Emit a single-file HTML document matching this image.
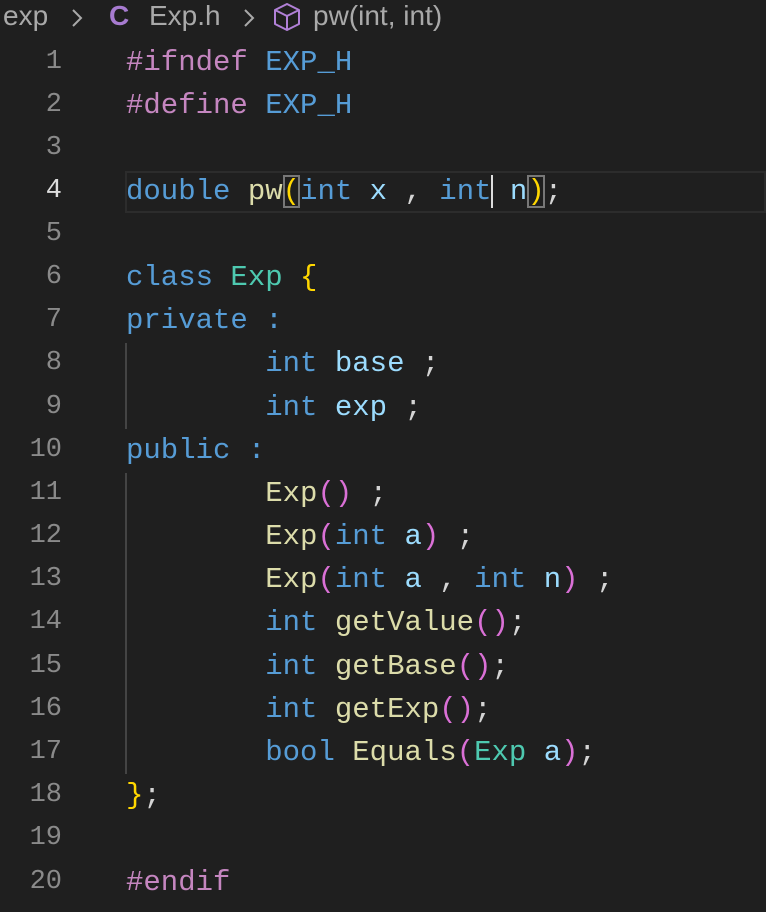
<!DOCTYPE html><html><head><style>
body{margin:0;width:766px;height:912px;background:#1f1f1f;overflow:hidden;position:relative;font-family:"Liberation Mono",monospace}
.bc{position:absolute;top:0;left:0;width:766px;height:34px;font:28px "Liberation Sans",sans-serif;color:#a9a9a9;white-space:nowrap;line-height:32px}
.bc span{position:absolute}
.l{position:absolute;left:0;width:766px;height:43px;line-height:43px;font-size:29px;white-space:pre;color:#d4d4d4}
.n{position:absolute;right:704px;color:#8a8a8a;font-size:27px}
.c{position:absolute;left:126px}
.k{color:#569cd6}.p{color:#c586c0}.f{color:#dcdcaa}.v{color:#9cdcfe}.t{color:#4ec9b0}.y{color:#ffd700}.m{color:#da70d6}
.g{position:absolute;left:125px;width:2px;background:#444}
.bx{outline:2px solid #777;outline-offset:-2px}
</style></head><body>
<div class="bc"><span style="left:3px">exp</span>
<svg style="position:absolute;left:70px;top:8px" width="14" height="20" viewBox="0 0 14 20"><path d="M3 2 L11 10 L3 18" fill="none" stroke="#a9a9a9" stroke-width="2"/></svg>
<span style="left:109px;color:#a77bd0;font-weight:bold">C</span><span style="left:149px">Exp.h</span>
<svg style="position:absolute;left:242px;top:8px" width="14" height="20" viewBox="0 0 14 20"><path d="M3 2 L11 10 L3 18" fill="none" stroke="#a9a9a9" stroke-width="2"/></svg>
<svg style="position:absolute;left:272px;top:2px" width="30" height="30" viewBox="0 0 30 30"><path d="M15 2 L27 8 L27 22 L15 28 L3 22 L3 8 Z M3 8 L15 14 L27 8 M15 14 L15 28" fill="none" stroke="#b180d7" stroke-width="2" stroke-linejoin="round"/></svg>
<span style="left:313px">pw(int, int)</span></div>
<div style="position:absolute;left:125px;top:171px;width:641px;height:42px;border:2px solid #2c2c2c;box-sizing:border-box"></div>
<div class="g" style="top:343px;height:86px"></div>
<div class="g" style="top:473px;height:301px"></div>
<div class="l" style="top:41px"><span class="n">1</span><span class="c"><span class="p">#ifndef</span> <span class="k">EXP_H</span></span></div>
<div class="l" style="top:84px"><span class="n">2</span><span class="c"><span class="p">#define</span> <span class="k">EXP_H</span></span></div>
<div class="l" style="top:127px"><span class="n">3</span></div>
<div class="l" style="top:170px"><span class="n" style="color:#ddd">4</span><span class="c"><span class="k">double</span> <span class="f">pw</span><span class="y bx">(</span><span class="k">int</span> <span class="v">x</span> , <span class="k">int</span><span style="border-left:2px solid #ddd;margin-left:-1px"></span> <span class="v">n</span><span class="y bx">)</span>;</span></div>
<div class="l" style="top:213px"><span class="n">5</span></div>
<div class="l" style="top:256px"><span class="n">6</span><span class="c"><span class="k">class</span> <span class="t">Exp</span> <span class="y">{</span></span></div>
<div class="l" style="top:299px"><span class="n">7</span><span class="c"><span class="k">private</span> <span class="k">:</span></span></div>
<div class="l" style="top:342px"><span class="n">8</span><span class="c">        <span class="k">int</span> <span class="v">base</span> ;</span></div>
<div class="l" style="top:386px"><span class="n">9</span><span class="c">        <span class="k">int</span> <span class="v">exp</span> ;</span></div>
<div class="l" style="top:429px"><span class="n">10</span><span class="c"><span class="k">public</span> <span class="k">:</span></span></div>
<div class="l" style="top:472px"><span class="n">11</span><span class="c">        <span class="f">Exp</span><span class="m">()</span> ;</span></div>
<div class="l" style="top:515px"><span class="n">12</span><span class="c">        <span class="f">Exp</span><span class="m">(</span><span class="k">int</span> <span class="v">a</span><span class="m">)</span> ;</span></div>
<div class="l" style="top:558px"><span class="n">13</span><span class="c">        <span class="f">Exp</span><span class="m">(</span><span class="k">int</span> <span class="v">a</span> , <span class="k">int</span> <span class="v">n</span><span class="m">)</span> ;</span></div>
<div class="l" style="top:601px"><span class="n">14</span><span class="c">        <span class="k">int</span> <span class="f">getValue</span><span class="m">()</span>;</span></div>
<div class="l" style="top:645px"><span class="n">15</span><span class="c">        <span class="k">int</span> <span class="f">getBase</span><span class="m">()</span>;</span></div>
<div class="l" style="top:688px"><span class="n">16</span><span class="c">        <span class="k">int</span> <span class="f">getExp</span><span class="m">()</span>;</span></div>
<div class="l" style="top:731px"><span class="n">17</span><span class="c">        <span class="k">bool</span> <span class="f">Equals</span><span class="m">(</span><span class="t">Exp</span> <span class="v">a</span><span class="m">)</span>;</span></div>
<div class="l" style="top:774px"><span class="n">18</span><span class="c"><span class="y">}</span>;</span></div>
<div class="l" style="top:817px"><span class="n">19</span></div>
<div class="l" style="top:861px"><span class="n">20</span><span class="c"><span class="p">#endif</span></span></div>
</body></html>
